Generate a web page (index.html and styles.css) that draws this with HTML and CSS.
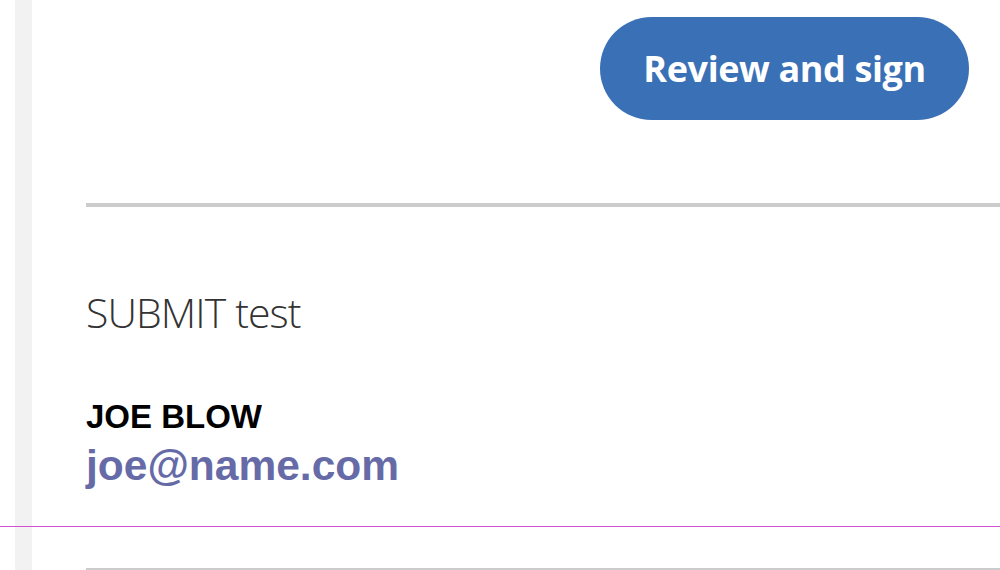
FILE: index.html
```html
<!DOCTYPE html>
<html>
<head>
<meta charset="utf-8">
<link rel="stylesheet" href="styles.css">
</head>
<body>
<div class="page">
  <div class="stripe"></div>
  <div class="main">
    <div class="actions">
      <button class="btn">Review and sign</button>
    </div>
    <hr class="rule">
    <h2 class="title">SUBMIT test</h2>
    <div class="person">
      <div class="name">JOE BLOW</div>
      <div class="email">joe@name.com</div>
    </div>
    <div class="divider"></div>
    <div class="rule-bottom"></div>
  </div>
</div>
</body>
</html>
```
FILE: styles.css
```css
html, body {
  margin: 0;
  padding: 0;
  background: #fff;
  height: 570px;
  overflow: hidden;
}
.page {
  display: flex;
  height: 570px;
  position: relative;
}
.stripe {
  width: 17px;
  margin-left: 15px;
  background: #f2f2f2;
  flex: none;
}
.main {
  flex: 1;
  padding-left: 54px;
  display: flex;
  flex-direction: column;
}
.actions {
  display: flex;
  justify-content: flex-end;
  padding-top: 17px;
  padding-right: 31px;
}
.btn {
  width: 369px;
  height: 103px;
  border: none;
  border-radius: 52px;
  background: #3a70b6;
  color: #fff;
  font-family: "Open Sans", sans-serif;
  font-weight: 700;
  font-size: 36px;
  letter-spacing: -0.4px;
  padding: 0;
}
.rule {
  margin: 83px 0 0 0;
  border: none;
  height: 4px;
  background: #cccccc;
}
.title {
  margin: 80px 0 0 0;
  font-family: "Open Sans", sans-serif;
  font-weight: 300;
  font-size: 41px;
  color: #333;
  line-height: 50px;
  letter-spacing: -0.9px;
}
.person {
  margin-top: 62px;
  font-family: "Liberation Sans", Arial, sans-serif;
  font-weight: 700;
}
.name {
  font-size: 33px;
  line-height: 36px;
  color: #000;
}
.email {
  font-size: 42.5px;
  line-height: 62px;
  color: #666ba8;
}
.divider {
  position: absolute;
  left: 0;
  right: 0;
  top: 526px;
  height: 1px;
  background: #d24fd2;
}
.rule-bottom {
  margin-top: auto;
  height: 2px;
  background: #cccccc;
}
```
